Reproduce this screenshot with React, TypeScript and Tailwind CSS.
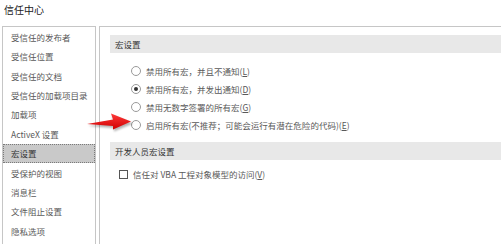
import React from 'react';

const navItems = [
  '受信任的发布者',
  '受信任位置',
  '受信任的文档',
  '受信任的加载项目录',
  '加载项',
  'ActiveX 设置',
  '宏设置',
  '受保护的视图',
  '消息栏',
  '文件阻止设置',
  '隐私选项',
];

const macroOptions = [
  { label: '禁用所有宏，并且不通知', key: 'L', checked: false },
  { label: '禁用所有宏，并发出通知', key: 'D', checked: true },
  { label: '禁用无数字签署的所有宏', key: 'G', checked: false },
  { label: '启用所有宏(不推荐；可能会运行有潜在危险的代码)', key: 'E', checked: false },
];

function Radio({ checked }: { checked: boolean }) {
  return (
    <span className="w-[10px] h-[10px] rounded-full border border-[#9a9a9a] bg-white flex items-center justify-center shrink-0">
      {checked && <span className="w-[4px] h-[4px] rounded-full bg-[#333]" />}
    </span>
  );
}

function SectionHeader({ title }: { title: string }) {
  return (
    <div className="h-[18px] bg-[#e8e8e8] pl-[5px] flex items-center text-[8.5px] text-[#333]">
      {title}
    </div>
  );
}

export default function App() {
  return (
    <div
      className="relative w-[501px] h-[244px] bg-white overflow-hidden"
      style={{ fontFamily: '"Noto Sans CJK SC", "Noto Sans", sans-serif' }}
    >
      {/* Title */}
      <div className="h-[26px] pl-[4px] pt-[2px] text-[10px] leading-[16px] text-[#222]">信任中心</div>

      <div className="flex h-[218px]">
        {/* Left nav */}
        <nav className="ml-[2px] w-[94px] border border-b-0 border-[#c6c6c6] pt-[0.5px]">
          {navItems.map((item) => {
            const selected = item === '宏设置';
            return (
              <div
                key={item}
                className={
                  selected
                    ? 'h-[19.4px] flex items-center pl-[7px] bg-[#c9c9c9] border border-dotted border-[#7a7a7a] text-[8.5px] text-[#333]'
                    : 'h-[19.4px] flex items-center pl-[8px] text-[8.5px] text-[#595959]'
                }
              >
                {item}
              </div>
            );
          })}
        </nav>

        {/* Right panel */}
        <div className="ml-[3px] flex-1 border-l border-t border-[#c6c6c6] pl-[10px] pt-[8px]">
          <SectionHeader title="宏设置" />

          <div className="mt-[9px] flex flex-col">
            {macroOptions.map((opt) => (
              <div key={opt.key} className="h-[18px] flex items-center pl-[21px] gap-[5px]">
                <Radio checked={opt.checked} />
                <span className="text-[8.5px] text-[#595959] whitespace-nowrap">
                  {opt.label}(<span className="underline">{opt.key}</span>)
                </span>
              </div>
            ))}
          </div>

          <div className="mt-[8px]">
            <SectionHeader title="开发人员宏设置" />
          </div>

          <div className="mt-[5px] h-[18px] flex items-center pl-[9px] gap-[5px]">
            <span className="w-[9px] h-[9px] border border-[#555] bg-white shrink-0" />
            <span className="text-[8.5px] text-[#595959] whitespace-nowrap">
              信任对 VBA 工程对象模型的访问(<span className="underline">V</span>)
            </span>
          </div>
        </div>
      </div>

      {/* Red annotation arrow */}
      <svg
        className="absolute left-[84px] top-[108px]"
        width="54"
        height="28"
        viewBox="84 108 54 28"
      >
        <defs>
          <linearGradient id="arrowFill" x1="0" y1="0" x2="0" y2="1">
            <stop offset="0" stopColor="#ff3a3a" />
            <stop offset="1" stopColor="#d00000" />
          </linearGradient>
          <filter id="arrowShadow" x="-20%" y="-40%" width="140%" height="180%">
            <feGaussianBlur stdDeviation="1" />
          </filter>
        </defs>
        <polygon
          points="88,126 114,121.5 112,115.5 133,123.5 114,131.5 114,128"
          fill="#000"
          opacity="0.3"
          filter="url(#arrowShadow)"
        />
        <polygon
          points="87,124 113,119.5 111,113.5 131,121.5 113,129.5 113,126"
          fill="url(#arrowFill)"
        />
      </svg>
    </div>
  );
}
